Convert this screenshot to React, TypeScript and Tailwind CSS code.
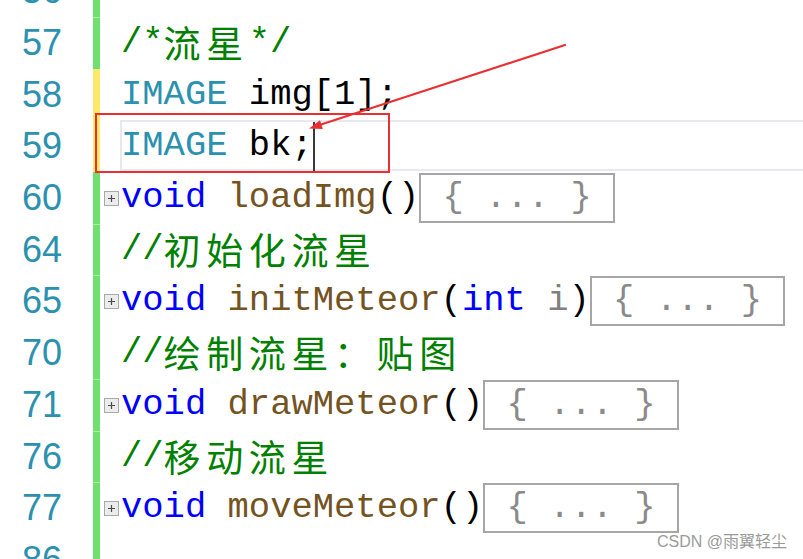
import React from "react";

type Tok = { t: string; c: string };
type Line = {
  n: string;
  bar: "g" | "y";
  sep?: boolean;
  fold?: boolean;
  toks: Tok[];
  box?: boolean;
  current?: boolean;
};

const KW = "text-[#0000ff]";
const FN = "text-[#74531f]";
const TY = "text-[#2b91af]";
const CM = "text-[#008000]";
const PL = "text-black";
const PA = "text-[#808080]";

const lines: Line[] = [
  { n: "56", bar: "g", toks: [] },
  { n: "57", bar: "g", sep: true, toks: [{ t: "/*流星*/", c: CM }] },
  { n: "58", bar: "y", toks: [{ t: "IMAGE", c: TY }, { t: " img[1];", c: PL }] },
  { n: "59", bar: "y", current: true, toks: [{ t: "IMAGE", c: TY }, { t: " bk;", c: PL }] },
  {
    n: "60",
    bar: "g",
    fold: true,
    box: true,
    toks: [{ t: "void", c: KW }, { t: " ", c: PL }, { t: "loadImg", c: FN }, { t: "()", c: PL }],
  },
  { n: "64", bar: "g", sep: true, toks: [{ t: "//初始化流星", c: CM }] },
  {
    n: "65",
    bar: "g",
    sep: true,
    fold: true,
    box: true,
    toks: [
      { t: "void", c: KW },
      { t: " ", c: PL },
      { t: "initMeteor", c: FN },
      { t: "(", c: PL },
      { t: "int", c: KW },
      { t: " ", c: PL },
      { t: "i", c: PA },
      { t: ")", c: PL },
    ],
  },
  { n: "70", bar: "g", toks: [{ t: "//绘制流星：贴图", c: CM }] },
  {
    n: "71",
    bar: "g",
    sep: true,
    fold: true,
    box: true,
    toks: [{ t: "void", c: KW }, { t: " ", c: PL }, { t: "drawMeteor", c: FN }, { t: "()", c: PL }],
  },
  { n: "76", bar: "g", sep: true, toks: [{ t: "//移动流星", c: CM }] },
  {
    n: "77",
    bar: "g",
    sep: true,
    fold: true,
    box: true,
    toks: [{ t: "void", c: KW }, { t: " ", c: PL }, { t: "moveMeteor", c: FN }, { t: "()", c: PL }],
  },
  { n: "86", bar: "g", toks: [] },
];

const isCJK = (ch: string) => /[\u3000-\u9fff\uff00-\uffef]/.test(ch);

function renderText(text: string, cls: string, key: string) {
  const runs: { s: string; cjk: boolean }[] = [];
  for (const ch of text) {
    const c = isCJK(ch);
    const last = runs[runs.length - 1];
    if (last && last.cjk === c) last.s += ch;
    else runs.push({ s: ch, cjk: c });
  }
  return runs.map((r, i) =>
    r.cjk ? (
      <span
        key={key + i}
        className={`${cls} text-[37px] tracking-[5.6px]`}
        style={{ fontFamily: '"Noto Sans CJK SC", sans-serif' }}
      >
        {r.s}
      </span>
    ) : (
      <span key={key + i} className={cls}>
        {r.s}
      </span>
    )
  );
}

function FoldBox() {
  return (
    <svg width="15" height="15" viewBox="0 0 15 15" className="block">
      <rect x="0.5" y="0.5" width="14" height="14" fill="#ececec" stroke="#a9a9a9" />
      <path d="M4 7.5 H11 M7.5 4 V11" stroke="#4a4a4a" strokeWidth="1.2" />
    </svg>
  );
}

export default function App() {
  return (
    <div className="relative w-[803px] h-[559px] overflow-hidden bg-white">
      <div className="-mt-[34.7px] flex flex-col">
        {lines.map((l) => (
          <div key={l.n} className="flex h-[51.7px] items-stretch">
            <div
              className="w-[62px] text-right text-[36px] leading-[51.7px] text-[#2b91af]"
              style={{ fontFamily: '"Liberation Sans", Arial, sans-serif' }}
            >
              {l.n}
            </div>
            <div className="w-[31px]" />
            <div
              className={`w-[7px] ${l.bar === "g" ? "bg-[#6fdf6f]" : "bg-[#fce96b]"} ${
                l.sep ? "border-t border-[#a8eea8]" : ""
              }`}
            />
            <div className="w-[21px] pl-[4px] pt-[19px]">{l.fold ? <FoldBox /> : null}</div>
            <div className="relative flex-1 flex items-center">
              {l.current ? (
                <div className="absolute left-[-1px] right-[-10px] top-[-0.5px] bottom-[1px] border-2 border-[#e8e8f0]" />
              ) : null}
              <div
                className="relative flex items-center whitespace-pre text-[35.5px] leading-[51.7px]"
                style={{ fontFamily: '"Liberation Mono", "Courier New", monospace' }}
              >
                {l.toks.map((tk, i) => renderText(tk.t, tk.c, l.n + "-" + i))}
                {l.current ? <span className="inline-block w-[2px] h-[49px] bg-[#3a3a3a]" /> : null}
                {l.box ? (
                  <span className="inline-flex items-center h-[50px] border-2 border-[#a6a6a6] text-[#8a8a8a]">
                    {" { ... } "}
                  </span>
                ) : null}
              </div>
            </div>
          </div>
        ))}
      </div>

      <svg className="absolute left-0 top-0 pointer-events-none" width="803" height="559">
        <rect x="96" y="114" width="293" height="58" fill="none" stroke="#ea2f33" strokeWidth="2" />
        <line x1="565" y1="45" x2="318" y2="125.5" stroke="#ea2f33" strokeWidth="2.2" strokeLinecap="round" />
        <polygon points="309,128.5 322.8,129 320,120.3" fill="#ea2f33" />
      </svg>

      <div
        className="absolute right-[16px] bottom-[9px] text-[16px] leading-[16px] text-[#9a9a9a]"
        style={{
          fontFamily: '"Liberation Sans", "Noto Sans CJK SC", sans-serif',
          textShadow: "0 0 2px #fff, 0 0 2px #fff",
        }}
      >
        CSDN @雨翼轻尘
      </div>
    </div>
  );
}
